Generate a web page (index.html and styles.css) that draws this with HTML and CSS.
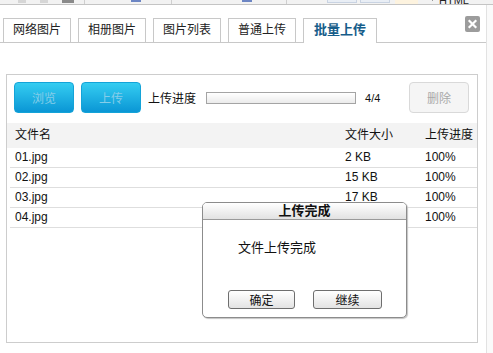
FILE: index.html
```html
<!DOCTYPE html>
<html lang="zh-CN">
<head>
  <meta charset="UTF-8">
  <title>批量上传</title>
  <link rel="stylesheet" href="styles.css">
</head>
<body>
  <div class="topbar">
    <span class="tb-bit tb-gray" style="margin-left:18px"></span>
    <span class="tb-bit tb-gray"></span>
    <span class="tb-bit tb-dark"></span>
    <span class="tb-sep"></span>
    <span class="tb-bit tb-blue" style="margin-left:46px"></span>
    <span class="tb-sep" style="margin-left:30px"></span>
    <span class="tb-bit tb-blue" style="margin-left:70px"></span>
    <span class="tb-sep" style="margin-left:34px"></span>
    <span class="tb-box" style="margin-left:40px"></span>
    <span class="tb-box"></span>
    <span class="tb-cream"></span>
    <span class="tb-text">HTML</span>
  </div>

  <div class="dialog">
    <div class="tabs">
      <div class="tab">网络图片</div>
      <div class="tab">相册图片</div>
      <div class="tab">图片列表</div>
      <div class="tab">普通上传</div>
      <div class="tab active">批量上传</div>
      <button class="close" title="关闭">
        <svg width="15" height="16" viewBox="0 0 15 16">
          <path d="M4.5 5 L10.5 11 M10.5 5 L4.5 11" stroke="#fff" stroke-width="2.2" stroke-linecap="square"/>
        </svg>
      </button>
    </div>

    <div class="panel">
      <div class="toolbar">
        <button class="btn-blue">浏览</button>
        <button class="btn-blue">上传</button>
        <span class="progress-label">上传进度</span>
        <div class="progress"></div>
        <span class="count">4/4</span>
        <button class="btn-del">删除</button>
      </div>

      <div class="file-table">
        <div class="row head"><span>文件名</span><span>文件大小</span><span>上传进度</span></div>
        <div class="row"><span>01.jpg</span><span>2 KB</span><span>100%</span></div>
        <div class="row"><span>02.jpg</span><span>15 KB</span><span>100%</span></div>
        <div class="row"><span>03.jpg</span><span>17 KB</span><span>100%</span></div>
        <div class="row"><span>04.jpg</span><span>16 KB</span><span>100%</span></div>
      </div>

      <div class="modal">
        <div class="modal-title">上传完成</div>
        <div class="modal-body">文件上传完成</div>
        <div class="modal-actions">
          <button class="btn-gray ok">确定</button>
          <button class="btn-gray">继续</button>
        </div>
      </div>
    </div>
  </div>
</body>
</html>
```

FILE: styles.css
```css
* {
  box-sizing: border-box;
}

body {
  margin: 0;
  background-color: #fafafa;
  font-family: "Liberation Sans", "Noto Sans CJK SC", sans-serif;
  font-size: 12px;
  color: #111;
}

button {
  font-family: inherit;
  padding: 0;
  cursor: pointer;
}

/* strip of the page behind the dialog */
.topbar {
  display: flex;
  align-items: flex-start;
  height: 5px;
  width: 493px;
  overflow: hidden;
  background-color: #f2f2f2;
  border-bottom: 1px solid #c4c4c4;
}

.tb-bit {
  width: 8px;
  height: 3px;
  margin-left: 14px;
}

.tb-gray {
  background-color: #d6d6d6;
}

.tb-dark {
  width: 12px;
  margin-left: 14px;
  background-color: #8a8a8a;
}

.tb-blue {
  width: 10px;
  height: 2px;
  background-color: #6d86c4;
}

.tb-sep {
  width: 1px;
  height: 4px;
  margin-left: 10px;
  background-color: #cfcfcf;
}

.tb-box {
  width: 30px;
  height: 3px;
  margin-left: 3px;
  border: 1px solid #c9d3e2;
  border-top: none;
  background-color: #e9eef5;
}

.tb-cream {
  width: 23px;
  height: 4px;
  margin-left: 5px;
  background-color: #fdf3df;
}

.tb-text {
  margin-left: 14px;
  font-size: 11px;
  line-height: 1px;
  color: #222;
  border-left: 1px solid #999;
  padding-left: 6px;
}

/* dialog */
.dialog {
  width: 487px;
  height: 348px;
  background-color: #fff;
  border-right: 1px solid #e2e2e2;
}

.tabs {
  display: flex;
  align-items: flex-end;
  gap: 7px;
  padding: 13px 6px 0 3px;
  border-bottom: 1px solid #c8c8c8;
}

.tab {
  width: 68px;
  height: 24px;
  line-height: 22px;
  text-align: center;
  border: 1px solid #c8c8c8;
  border-bottom: none;
  background-color: #fff;
  color: #222;
}

.tab.active {
  width: 74px;
  height: 25px;
  margin-bottom: -1px;
  font-size: 13px;
  font-weight: bold;
  color: #165d8a;
}

.close {
  align-self: flex-start;
  margin-top: -2px;
  margin-left: auto;
  width: 15px;
  height: 16px;
  border: none;
  border-radius: 2px;
  background-color: #9c9c9c;
}

.close svg {
  display: block;
}

/* upload panel */
.panel {
  position: relative;
  width: 472px;
  height: 269px;
  margin: 31px 0 0 6px;
  border: 1px solid #cdcdcd;
  background-color: #fff;
}

.toolbar {
  display: flex;
  align-items: center;
  padding: 7px 8px 0 7px;
}

.btn-blue {
  width: 60px;
  height: 31px;
  margin-right: 7px;
  border: 1px solid #14a3d8;
  border-radius: 4px;
  background: linear-gradient(#35cdf1, #0a96d5);
  color: #86cde9;
  font-size: 12px;
}

.progress-label {
  margin-right: 10px;
}

.progress {
  width: 150px;
  height: 12px;
  border: 1px solid #a4a4a4;
  background: linear-gradient(#ffffff, #ebebeb);
}

.count {
  margin-left: 9px;
  font-size: 11px;
}

.btn-del {
  width: 60px;
  height: 31px;
  margin-left: auto;
  border: 1px solid #d9d9d9;
  border-radius: 4px;
  background-color: #f5f5f5;
  color: #a9a9a9;
  font-size: 12px;
}

.file-table {
  margin-top: 10px;
}

.row {
  display: grid;
  grid-template-columns: 1fr 80px 52px;
  height: 20px;
  line-height: 19px;
  margin-left: 3px;
  padding-left: 5px;
  border-bottom: 1px solid #dedede;
}

.row.head {
  height: 25px;
  line-height: 25px;
  margin-left: 0;
  padding-left: 8px;
  border-bottom: none;
  background-color: #f3f3f3;
}

/* completion message box */
.modal {
  position: absolute;
  left: 195px;
  top: 127px;
  width: 205px;
  height: 116px;
  border: 1px solid #8c8c8c;
  border-radius: 5px;
  background-color: #fff;
  box-shadow: 1px 1px 1px #c4c4c4;
  overflow: hidden;
}

.modal-title {
  height: 17px;
  line-height: 16px;
  text-align: center;
  font-size: 13px;
  font-weight: bold;
  border-bottom: 1px solid #9a9a9a;
  background: linear-gradient(#ffffff, #e2e2e2);
}

.modal-body {
  padding: 17px 0 0 35px;
  height: 70px;
  font-size: 13px;
}

.modal-actions {
  display: flex;
  justify-content: center;
  gap: 18px;
  padding-left: 1px;
}

.btn-gray {
  width: 69px;
  height: 19px;
  border: 1px solid #6e6e6e;
  border-radius: 3px;
  background: linear-gradient(#ffffff, #e3e3e3);
  font-size: 12px;
  color: #111;
}

.btn-gray.ok {
  width: 67px;
}
```
